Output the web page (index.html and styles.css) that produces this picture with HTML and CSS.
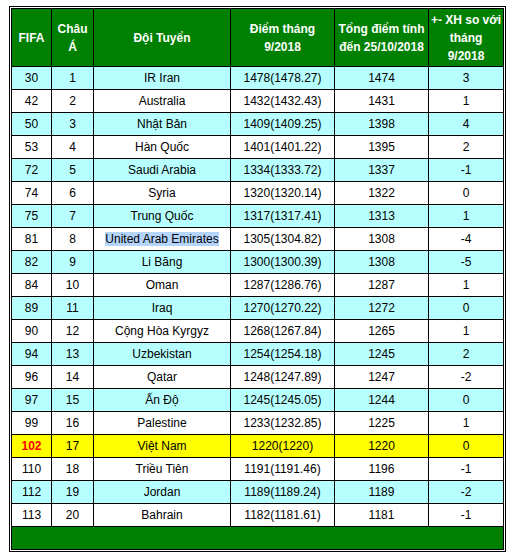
FILE: index.html
```html
<!DOCTYPE html>
<html lang="vi">
<head>
  <meta charset="UTF-8">
  <meta name="viewport" content="width=device-width, initial-scale=1.0">

  <title>Bảng xếp hạng FIFA - Châu Á</title>

  <link rel="stylesheet" href="styles.css">

</head>
<body>

  <div class="frame">
    <table class="rank">
      <colgroup>
        <col class="c-fifa">
        <col class="c-asia">
        <col class="c-team">
        <col class="c-month">
        <col class="c-total">
        <col class="c-diff">
      </colgroup>
      <thead>
        <tr>
          <th>FIFA</th>
          <th>Châu<br>Á</th>
          <th>Đội Tuyển</th>
          <th>Điểm tháng<br>9/2018</th>
          <th>Tổng điểm tính<br>đến 25/10/2018</th>
          <th>+- XH so với<br>tháng<br>9/2018</th>
        </tr>
      </thead>
      <tbody>
        <tr class="odd"><td>30</td><td>1</td><td>IR Iran</td><td>1478(1478.27)</td><td>1474</td><td>3</td></tr>
        <tr><td>42</td><td>2</td><td>Australia</td><td>1432(1432.43)</td><td>1431</td><td>1</td></tr>
        <tr class="odd"><td>50</td><td>3</td><td>Nhật Bản</td><td>1409(1409.25)</td><td>1398</td><td>4</td></tr>
        <tr><td>53</td><td>4</td><td>Hàn Quốc</td><td>1401(1401.22)</td><td>1395</td><td>2</td></tr>
        <tr class="odd"><td>72</td><td>5</td><td>Saudi Arabia</td><td>1334(1333.72)</td><td>1337</td><td>-1</td></tr>
        <tr><td>74</td><td>6</td><td>Syria</td><td>1320(1320.14)</td><td>1322</td><td>0</td></tr>
        <tr class="odd"><td>75</td><td>7</td><td>Trung Quốc</td><td>1317(1317.41)</td><td>1313</td><td>1</td></tr>
        <tr><td>81</td><td>8</td><td><span class="picked">United Arab Emirates</span></td><td>1305(1304.82)</td><td>1308</td><td>-4</td></tr>
        <tr class="odd"><td>82</td><td>9</td><td>Li Băng</td><td>1300(1300.39)</td><td>1308</td><td>-5</td></tr>
        <tr><td>84</td><td>10</td><td>Oman</td><td>1287(1286.76)</td><td>1287</td><td>1</td></tr>
        <tr class="odd"><td>89</td><td>11</td><td>Iraq</td><td>1270(1270.22)</td><td>1272</td><td>0</td></tr>
        <tr><td>90</td><td>12</td><td>Cộng Hòa Kyrgyz</td><td>1268(1267.84)</td><td>1265</td><td>1</td></tr>
        <tr class="odd"><td>94</td><td>13</td><td>Uzbekistan</td><td>1254(1254.18)</td><td>1245</td><td>2</td></tr>
        <tr><td>96</td><td>14</td><td>Qatar</td><td>1248(1247.89)</td><td>1247</td><td>-2</td></tr>
        <tr class="odd"><td>97</td><td>15</td><td>Ấn Độ</td><td>1245(1245.05)</td><td>1244</td><td>0</td></tr>
        <tr><td>99</td><td>16</td><td>Palestine</td><td>1233(1232.85)</td><td>1225</td><td>1</td></tr>
        <tr class="vn"><td class="vn-rank">102</td><td>17</td><td>Việt Nam</td><td>1220(1220)</td><td>1220</td><td>0</td></tr>
        <tr><td>110</td><td>18</td><td>Triều Tiên</td><td>1191(1191.46)</td><td>1196</td><td>-1</td></tr>
        <tr class="odd"><td>112</td><td>19</td><td>Jordan</td><td>1189(1189.24)</td><td>1189</td><td>-2</td></tr>
        <tr><td>113</td><td>20</td><td>Bahrain</td><td>1182(1181.61)</td><td>1181</td><td>-1</td></tr>
      </tbody>
      <tfoot>
        <tr><td colspan="6"></td></tr>
      </tfoot>
    </table>
  </div>

</body>
</html>
```
FILE: styles.css
```css
body{
  background-color:white;
  margin:0;
  padding:6px 0 0 9px;
  font-family:"Liberation Sans", Arial, sans-serif;
  font-size:12px;
  color:#000;
}
.frame{
  display:inline-block;
  border:1px solid #000;
  padding:1px;
}
.rank{
  border-collapse:collapse;
  table-layout:fixed;
  width:492px;
  border:1px solid #000;
}
.c-fifa{ width:40px; }
.c-asia{ width:42px; }
.c-team{ width:137px; }
.c-month{ width:104px; }
.c-total{ width:94px; }
.c-diff{ width:75px; }

.rank th{
  background-color:#008000;
  color:#fff;
  font-weight:bold;
  font-size:12px;
  line-height:18px;
  height:57px;
  padding:0;
  border:1px solid #000;
  text-align:center;
  vertical-align:middle;
}
.rank td{
  height:22px;
  padding:0;
  border:1px solid #000;
  text-align:center;
  vertical-align:middle;
  background-color:#fff;
}
.rank tr.odd td{
  background-color:#b7ffff;
}
.rank tr.vn td{
  background-color:#ffff00;
}
.rank td.vn-rank{
  color:#ff0000;
  font-weight:bold;
}
.picked{
  background-color:#b4d4fc;
}
.rank tfoot td{
  background-color:#008000;
}
```
